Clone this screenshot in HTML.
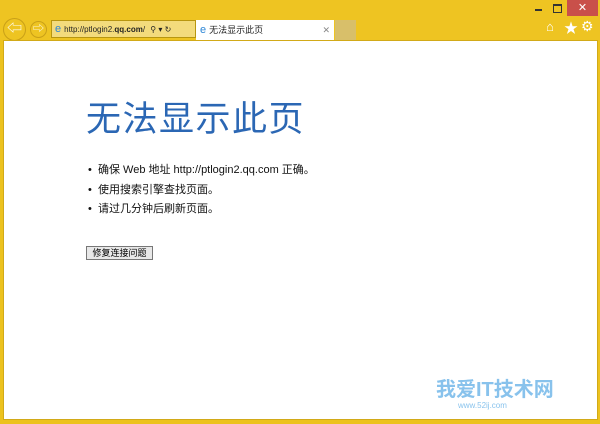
<!DOCTYPE html>
<html><head><meta charset="utf-8"><style>
body{margin:0;width:600px;height:424px;background:#ecc21e;position:relative;overflow:hidden;font-family:"Liberation Sans","Noto Sans CJK SC",sans-serif}
.a{position:absolute}
</style></head><body>
<div class="a" style="left:0;top:0;width:600px;height:40px;background:#eec422"></div>
<div class="a" style="left:567px;top:0;width:31px;height:16px;background:#c9504a;color:#fff;font-size:11px;text-align:center;line-height:16px">✕</div>
<div class="a" style="left:535px;top:9px;width:7px;height:2px;background:#333"></div>
<div class="a" style="left:553px;top:4px;width:7px;height:6px;border:1px solid #333;border-top-width:2px"></div>
<div class="a" style="left:3px;top:18px;width:21px;height:21px;border:1px solid #c9a018;border-radius:50%;color:#fff;font-size:15px;text-align:center;line-height:20px">⇦</div>
<div class="a" style="left:30px;top:21px;width:15px;height:15px;border:1px solid #c9a018;border-radius:50%;color:#fff;font-size:11px;text-align:center;line-height:15px">⇨</div>
<div class="a" style="left:51px;top:20px;width:143px;height:16px;border:1px solid #b8960f;background:#f3db7c;font-size:8px;line-height:16px;color:#222"><span style="color:#2c86d6;font-size:11px;margin:0 3px 0 3px">e</span>http://ptlogin2.<b>qq.com</b>/ <span style="margin-left:3px">⚲ ▾ ↻</span></div>
<div class="a" style="left:196px;top:20px;width:138px;height:20px;background:#fff;font-size:9px;line-height:20px;color:#222"><span style="color:#2c86d6;font-size:11px;margin:0 3px 0 4px">e</span>无法显示此页<span style="position:absolute;right:4px;color:#888">✕</span></div>
<div class="a" style="left:335px;top:20px;width:21px;height:20px;background:#d8bf6a"></div>
<div class="a" style="left:546px;top:19px;color:#fff;font-size:13px">⌂</div>
<div class="a" style="left:564px;top:18px;color:#fff;font-size:14px">★</div>
<div class="a" style="left:581px;top:18px;color:#fff;font-size:14px">⚙</div>
<div class="a" style="left:3px;top:40px;width:593px;height:378px;background:#fff;border:1px solid #d2aa18"></div>
<div class="a" style="left:86px;top:91px;font-size:35px;color:#2b67b4;letter-spacing:1.5px">无法显示此页</div>
<div class="a" style="left:88px;top:161px;font-size:11px;color:#111;line-height:19.5px">
<div>•&nbsp; 确保 Web 地址 http://ptlogin2.qq.com 正确。</div>
<div>•&nbsp; 使用搜索引擎查找页面。</div>
<div>•&nbsp; 请过几分钟后刷新页面。</div></div>
<div class="a" style="left:86px;top:246px;width:65px;height:12px;border:1px solid #777;background:#e8e8e8;font-size:9px;line-height:12px;text-align:center">修复连接问题</div>
<div class="a" style="left:436px;top:373px;font-size:20px;font-weight:bold;color:#6bb4e8;opacity:.8">我爱IT技术网</div>
<div class="a" style="left:458px;top:401px;font-size:8px;color:#6bb4e8;opacity:.8">www.52ij.com</div>
</body></html>
